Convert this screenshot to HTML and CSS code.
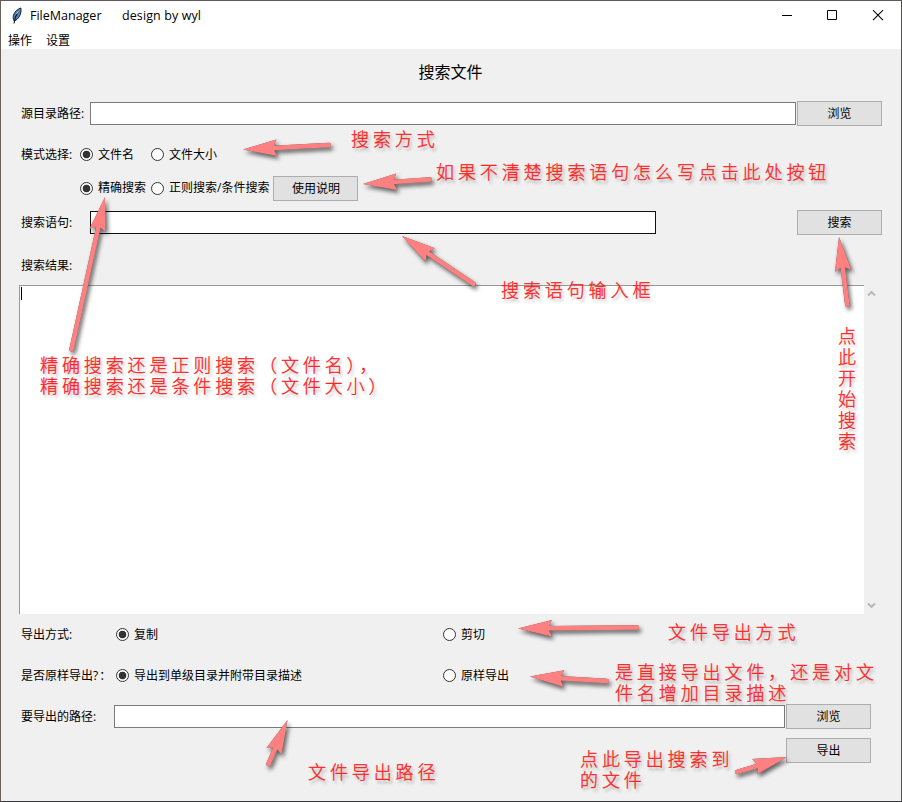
FILE: index.html
```html
<!DOCTYPE html>
<html lang="zh-CN">
<head>
<meta charset="utf-8">
<title>FileManager</title>
<link rel="stylesheet" href="styles.css">
</head>
<body>
<div class="window">
  <header class="titlebar">
    <svg class="feather" width="12" height="18" viewBox="0 0 12 18"><path d="M3.200 14C.6 10 3 3.500 9.800 1c.9 3.500-.5 9.500-5.300 12.500z" fill="#4f85bd" stroke="#17202c"/><path d="M8 3.500 4.500 10 3 16.500" fill="none" stroke="#111" stroke-width="1.100"/><path d="M8 3.500 5.500 7" stroke="#cfe3f7" fill="none"/></svg>
    <span class="app">FileManager</span>
    <span class="author">design by wyl</span>
    <svg class="controls" width="102" height="12" viewBox="0 0 102 12" fill="none" stroke="#000"><path d="M0 5.500h10M45.500 .5h9v9h-9z"/><path d="M91 .2l10 10M101 .2l-10 10" stroke-width="1.100"/></svg>
  </header>
  <nav class="menu"><span>操作</span><span>设置</span></nav>
  <main>
    <h1>搜索文件</h1>
    <div class="row source"><label class="caption">源目录路径:</label><span class="field"></span><button>浏览</button></div>
    <div class="row mode"><span class="caption narrow">模式选择:</span><span class="radio on first">文件名</span><span class="radio">文件大小</span></div>
    <div class="row kind"><span class="caption narrow"></span><span class="radio on first">精确搜索</span><span class="radio">正则搜索/条件搜索</span><button class="help">使用说明</button></div>
    <div class="row query"><label class="caption">搜索语句:</label><span class="field focus"></span><button>搜索</button></div>
    <div class="row result">搜索结果:</div>
    <div class="output">
      <div class="text"><span class="caret"></span></div>
      <div class="scroll">
        <svg width="9" height="7" viewBox="0 0 9 7"><path d="M1 5.500 4.500 2 8 5.500"/></svg>
        <svg width="9" height="7" viewBox="0 0 9 7"><path d="M1 1.500 4.500 5 8 1.500"/></svg>
      </div>
    </div>
    <div class="row export"><span class="caption wide">导出方式:</span><span class="radio on half">复制</span><span class="radio">剪切</span></div>
    <div class="row export"><span class="caption wide">是否原样导出?<span class="colon">：</span></span><span class="radio on half">导出到单级目录并附带目录描述</span><span class="radio">原样导出</span></div>
    <div class="row dest"><label class="caption path">要导出的路径:</label><span class="field"></span><button>浏览</button></div>
    <div class="row submit"><button>导出</button></div>
  </main>
</div>

<svg class="arrows" width="902" height="802" viewBox="0 0 902 802">
  <defs><path id="head" d="M0 0 34-8.200 31-2.500V2.500L34 8.200z"/></defs>
  <g transform="translate(243 149.500) rotate(-3)"><path d="M30 0H86"/><use href="#head"/></g>
  <g transform="translate(363 184) rotate(-3.800)"><path d="M30 0H67"/><use href="#head"/></g>
  <g transform="translate(402 236) rotate(33.900)"><path d="M30 0H86"/><use href="#head"/></g>
  <g transform="translate(105 197) rotate(102.400)"><path d="M30 0H156"/><use href="#head"/></g>
  <g transform="translate(839 237) rotate(83)"><path d="M30 0H68"/><use href="#head"/></g>
  <g transform="translate(518 628.500) rotate(-.5)"><path d="M30 0H119"/><use href="#head"/></g>
  <g transform="translate(530 676.500) rotate(3.300)"><path d="M30 0H77"/><use href="#head"/></g>
  <g transform="translate(287.500 720) rotate(113.400)"><path d="M25 0H48"/><use href="#head"/></g>
  <g transform="translate(787 757) rotate(163.300)"><path d="M30 0H52"/><use href="#head"/></g>
</svg>
<p class="note n-mode">搜索方式</p>
<p class="note n-help">如果不清楚搜索语句怎么写点击此处按钮</p>
<p class="note n-query">搜索语句输入框</p>
<p class="note n-kind">精确搜索还是正则搜索（文件名），<br>精确搜索还是条件搜索（文件大小）</p>
<p class="note n-start">点此开始搜索</p>
<p class="note n-way">文件导出方式</p>
<p class="note n-desc">是直接导出文件，还是对文<br>件名增加目录描述</p>
<p class="note n-path">文件导出路径</p>
<p class="note n-export">点此导出搜索到<br>的文件</p>
</body>
</html>
```
FILE: styles.css
```css
*, *::before { box-sizing: border-box; }
body { margin: 0; width: 902px; height: 802px; overflow: hidden; position: relative; }
.window {
  width: 902px; height: 802px;
  border: 1px solid; border-color: #62595a #50504f #38383b #6b5f5c;
  background: #f0f0f0; color: #000;
  font: 12px/16px "Open Sans", "Noto Sans CJK SC", sans-serif;
}
.titlebar { height: 29px; background: #fff; display: flex; align-items: center; padding: 0 17px 0 10px; font-size: 12.5px; }
.feather { margin-right: 7px; }
.app { width: 92px; }
.author { letter-spacing: .1px; }
.controls { margin-left: auto; }
.menu { height: 19px; background: #fff; display: flex; gap: 14px; padding: 3px 7px 0; }
main { padding: 0 19px 0 20px; }
h1 { margin: 0; height: 47px; font-size: 16px; line-height: 47px; font-weight: 400; text-align: center; padding-right: 2px; }
.row { display: flex; align-items: center; white-space: nowrap; }
.caption { width: 69px; flex: none; }
.narrow { width: 59px; }
.wide { width: 95px; }
.path { width: 93px; }
.colon { margin-left: 1px; }
.field { flex: 1; height: 23px; background: #fff; border: 1px solid #7a7a7a; margin-right: 1px; }
.focus { flex: 0 0 566px; margin-right: auto; border-color: #111; }
button {
  width: 85px; height: 25px; padding: 1px 0 0; border: 1px solid #adadad;
  background: #e1e1e1; color: #000; font: inherit;
}
.radio { display: flex; align-items: center; }
.radio::before {
  content: ""; width: 13px; height: 13px; margin-right: 5px;
  border: 1px solid #333; border-radius: 50%; background: #fff;
}
.on::before { background: radial-gradient(circle, #333 0 3.500px, #fff 4.200px); }
.first { width: 71px; }
.half { width: 327px; }
.help { margin-left: 4px; }
.source { height: 35px; }
.mode { height: 47px; }
.kind { height: 20px; }
.query { height: 48px; }
.query .caption { padding-top: 2px; }
.result { height: 39px; }
.output { height: 329px; display: flex; margin-left: -2px; }
.text { width: 845px; background: #fff; border-top: 1px solid #999; border-left: 1px solid #999; padding: 1px; }
.caret { display: block; width: 1px; height: 13px; background: #000; }
.scroll { width: 15px; display: flex; flex-direction: column; align-items: center; justify-content: space-between; padding: 5px 0; }
.scroll path { fill: none; stroke: #b5b5b5; stroke-width: 1.800; }
.export { height: 41px; }
.dest { height: 41px; padding-right: 11px; }
.submit { height: 27px; padding-right: 11px; justify-content: flex-end; }

.arrows { position: absolute; left: 0; top: 0; }
.arrows g { fill: #ff8080; }
.arrows g path { stroke: #ff8080; stroke-width: 4.500; stroke-linecap: round; }
.arrows { filter: drop-shadow(0 0 .4px #555) drop-shadow(2px 3px 2px rgba(0,0,0,.6)); }
.note {
  position: absolute; margin: 0; color: #f22; white-space: nowrap;
  font: 300 18px/21px "Noto Sans CJK SC", sans-serif; letter-spacing: 3.900px;
  -webkit-text-stroke: .3px #f22;
  text-shadow: 2px 3px 3px rgba(0,0,0,.3);
}
.n-mode { left: 351px; top: 128px; }
.n-help { left: 436px; top: 161px; }
.n-query { left: 501px; top: 279px; }
.n-kind { left: 40px; top: 354px; }
.n-start { left: 836px; top: 327px; writing-mode: vertical-rl; letter-spacing: 3px; }
.n-way { left: 668px; top: 621px; }
.n-desc { left: 615px; top: 661px; }
.n-path { left: 308px; top: 761px; }
.n-export { left: 580px; top: 748px; }
```
